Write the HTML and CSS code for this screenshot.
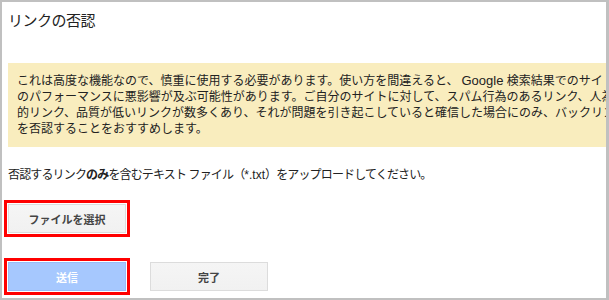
FILE: index.html
```html
<!DOCTYPE html>
<html lang="ja">
<head>
    <meta charset="UTF-8">
    <title>リンクの否認</title>
    <link rel="stylesheet" href="styles.css">
</head>
<body>
    <div class="frame">
        <h1 class="title">リンクの否認</h1>

        <div class="warning">
            <p>これは高度な機能なので、慎重に使用する必要があります。使い方を間違えると、<span class="brand">Google</span> 検索結果でのサイト<br>のパフォーマンスに悪影響が及ぶ可能性があります。ご自分のサイトに対して、スパム行為のあるリンク、人為<br>的リンク、品質が低いリンクが数多くあり、それが問題を引き起こしていると確信した場合にのみ、バックリンク<br>を否認することをおすすめします。</p>
        </div>

        <p class="hint">否認するリンク<b>のみ</b>を含むテキスト ファイル（<span class="latin">*.txt</span>）をアップロードしてください。</p>

        <div class="file-row">
            <button class="btn marked">ファイルを選択</button>
        </div>

        <div class="actions">
            <button class="btn btn-action marked" disabled>送信</button>
            <button class="btn">完了</button>
        </div>
    </div>
</body>
</html>
```

FILE: styles.css
```css
* {
    margin: 0;
    padding: 0;
    box-sizing: border-box;
}

body {
    font-family: "Liberation Sans", "Noto Sans CJK JP", sans-serif;
    color: #222;
    background-color: #fff;
}

.frame {
    width: 609px;
    height: 300px;
    border-style: solid;
    border-color: #c0c0c0;
    border-width: 2px 3px 2px 2px;
    padding: 8px 0 0 6px;
    overflow: hidden;
}

.title {
    font-size: 15px;
    font-weight: normal;
    line-height: 21px;
    color: #222;
    letter-spacing: -0.5px;
}

.warning {
    margin-top: 32px;
    background-color: #f9edbe;
    padding: 10px 0 10px 9px;
    white-space: nowrap;
    overflow: hidden;
}

.warning p {
    font-size: 12px;
    line-height: 16px;
}

.warning .brand {
    font-size: 13px;
    margin-left: 3px;
}

.hint {
    margin-top: 20px;
    font-size: 12px;
    line-height: 16px;
    letter-spacing: -0.85px;
    white-space: nowrap;
}

.hint b {
    font-weight: bold;
}

.hint .latin {
    letter-spacing: 0;
}

.file-row {
    margin-top: 21px;
}

.actions {
    margin-top: 29px;
    display: flex;
    gap: 24px;
}

.btn {
    width: 118px;
    height: 29px;
    font-family: "Liberation Sans", "Noto Sans CJK JP", sans-serif;
    font-size: 11px;
    font-weight: bold;
    color: #444;
    background-color: #f3f3f3;
    background-image: linear-gradient(#f5f5f5, #f1f1f1);
    border: 1px solid #dcdcdc;
    border-radius: 0;
    cursor: pointer;
}

.btn-action {
    color: #fff;
    background-color: #a6c8fe;
    background-image: none;
    border-color: #98bcf6;
    cursor: default;
}

.marked {
    outline: 3px solid #ff0000;
    outline-offset: 1px;
}
```
